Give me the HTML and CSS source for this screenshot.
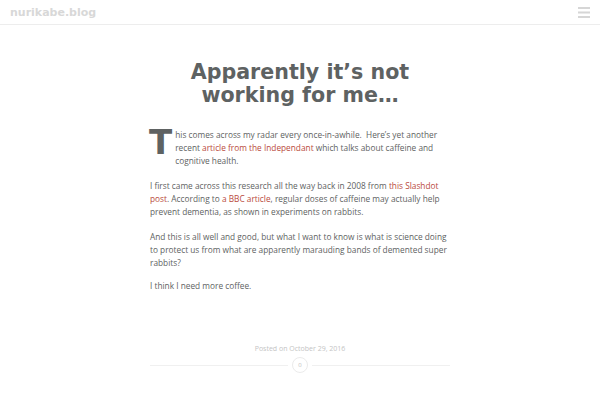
FILE: index.html
```html
<!DOCTYPE html>
<html>
<head>
<meta charset="utf-8">
<link rel="stylesheet" href="styles.css">
</head>
<body>
<header class="site-header">
  <a class="site-title" href="#">nurikabe.blog</a>
  <button class="menu-toggle" aria-label="Menu">
    <svg width="12" height="11" viewBox="0 0 12 11"><rect x="0" y="0" width="12" height="2" fill="#d6d6d6"/><rect x="0" y="4.5" width="12" height="2" fill="#d6d6d6"/><rect x="0" y="9" width="12" height="2" fill="#d6d6d6"/></svg>
  </button>
</header>
<main class="content">
  <article class="post">
    <h1 class="post-title">Apparently it’s not working for me…</h1>
    <div class="entry">
      <p class="first"><span class="dropcap">T</span>his comes across my radar every once-in-awhile.&nbsp; Here’s yet another recent <a href="#">article from the Independant</a> which talks about caffeine and cognitive health.</p>
      <p>I first came across this research all the way back in 2008 from <a href="#">this Slashdot post</a>. According to <a href="#">a BBC article</a>, regular doses of caffeine may actually help prevent dementia, as shown in experiments on rabbits.</p>
      <p>And this is all well and good, but what I want to know is what is science doing to protect us from what are apparently marauding bands of demented super rabbits?</p>
      <p class="last">I think I need more coffee.</p>
    </div>
    <footer class="post-meta">
      <div class="posted">Posted on October 29, 2016</div>
      <div class="divider"><span class="line"></span><span class="comments">0</span><span class="line"></span></div>
    </footer>
  </article>
</main>
</body>
</html>
```
FILE: styles.css
```css
html, body { margin: 0; padding: 0; background: #fff; }
body { font-family: "Open Sans", "DejaVu Sans", sans-serif; color: #5e6262; }
.site-header {
  height: 24px;
  border-bottom: 1px solid #ededed;
  display: flex;
  align-items: center;
  justify-content: space-between;
  padding: 0 10px;
}
.site-title {
  font-family: "DejaVu Sans", sans-serif;
  font-weight: bold;
  font-size: 11px;
  color: #d8d8d8;
  text-decoration: none;
}
.menu-toggle {
  border: 0; background: none; padding: 0; margin: 0;
  display: flex; width: 12px; height: 11px;
}
.content { display: flex; justify-content: center; }
.post { width: 300px; }
.post-title {
  font-family: "DejaVu Sans", sans-serif;
  font-weight: bold;
  font-size: 20.6px;
  line-height: 23px;
  text-align: center;
  color: #5e6262;
  margin: 36px 0 21px;
}
.entry p {
  font-size: 8.3px;
  line-height: 13px;
  margin: 0 0 12px;
}
.entry p.last { margin-top: -2px; margin-bottom: 0; }
.entry a { color: #b94a3c; text-decoration: none; }
.dropcap {
  float: left;
  font-family: "DejaVu Sans", sans-serif;
  font-weight: bold;
  font-size: 34px;
  line-height: 27px;
  margin: 1px 3px 0 -1px;
  color: #5e6262;
}
.post-meta { margin-top: 52px; }
.posted {
  text-align: center;
  font-size: 7px;
  line-height: 10px;
  color: #c4c4c4;
}
.divider {
  margin-top: 3px;
  display: flex;
  align-items: center;
  gap: 4px;
}
.divider .line { flex: 1; height: 1px; background: #f0f0f0; }
.comments {
  flex: none;
  width: 14px; height: 14px;
  border-radius: 50%;
  border: 1px solid #ebebeb;
  font-size: 6px; line-height: 1; color: #bdbdbd;
  display: flex; align-items: center; justify-content: center;
}
```
